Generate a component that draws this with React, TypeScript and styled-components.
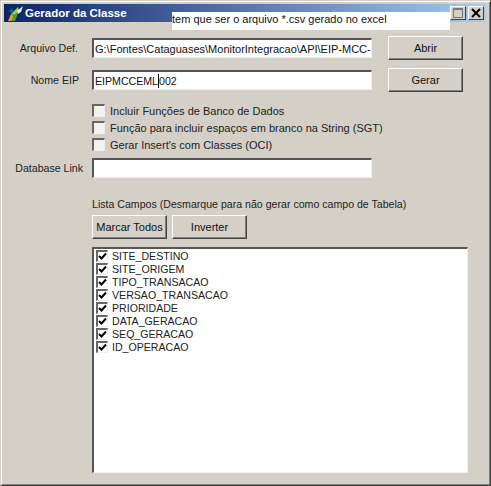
import styled, { createGlobalStyle } from "styled-components";

const FIELDS = [
  "SITE_DESTINO",
  "SITE_ORIGEM",
  "TIPO_TRANSACAO",
  "VERSAO_TRANSACAO",
  "PRIORIDADE",
  "DATA_GERACAO",
  "SEQ_GERACAO",
  "ID_OPERACAO",
];

const OPTIONS = [
  "Incluir Funções de Banco de Dados",
  "Função para incluir espaços em branco na String (SGT)",
  "Gerar Insert's com Classes (OCI)",
];

function AppIcon() {
  return (
    <svg width="18" height="17" viewBox="0 0 18 17">
      <path d="M2 16 L5 9 L8 11 L6 16 Z" fill="#d9a520" />
      <path d="M6 16 L9 6 L12 8 L9 16 Z" fill="#3f9f4a" />
      <path d="M5 9 L12 2 L13 6 L8 10 Z" fill="#8fcf5a" />
      <path d="M11 6 L17 1 L15 7 L12 9 Z" fill="#e8e8d0" />
      <path d="M3 6 L6 3 L7 6 L5 8 Z" fill="#1f6f3a" />
    </svg>
  );
}

function Check() {
  return (
    <svg width="9" height="9" viewBox="0 0 9 9">
      <path d="M1 4 L3.5 6.5 L8 1.5" fill="none" stroke="#000" strokeWidth="2" />
    </svg>
  );
}

export default function App() {
  return (
    <>
      <GlobalStyle />
      <Window>
        <TitleBar>
          <AppIcon />
          <TitleText>Gerador da Classe</TitleText>
          <TitleButtons>
            <CaptionButton>
              <svg width="10" height="10" viewBox="0 0 10 10">
                <path d="M0.5 0.5 H9.5 V9.5 H0.5 Z M0.5 1.5 H9.5" fill="none" stroke="#777" />
              </svg>
            </CaptionButton>
            <CaptionButton>
              <svg width="10" height="10" viewBox="0 0 10 10">
                <path d="M1 1 L9 9 M9 1 L1 9" fill="none" stroke="#000" strokeWidth="2" />
              </svg>
            </CaptionButton>
          </TitleButtons>
        </TitleBar>
        <Hint>tem que ser o arquivo *.csv gerado no excel</Hint>
        <Body>
          <FormRow>
            <RowLabel $inset={6}>Arquivo Def.</RowLabel>
            <TextField>G:\Fontes\Cataguases\MonitorIntegracao\API\EIP-MCC-</TextField>
            <PushButton>Abrir</PushButton>
          </FormRow>
          <FormRow>
            <RowLabel $inset={5}>Nome EIP</RowLabel>
            <TextField $compact>
              EIPMCCEML<Caret />002
            </TextField>
            <PushButton>Gerar</PushButton>
          </FormRow>
          <Options>
            {OPTIONS.map((text) => (
              <OptionRow key={text}>
                <CheckBox />
                {text}
              </OptionRow>
            ))}
          </Options>
          <LinkRow>
            <RowLabel $inset={1}>Database Link</RowLabel>
            <TextField />
          </LinkRow>
          <ListSection>
            <ListCaption>Lista Campos (Desmarque para não gerar como campo de Tabela)</ListCaption>
            <ListActions>
              <PushButton>Marcar Todos</PushButton>
              <PushButton>Inverter</PushButton>
            </ListActions>
            <FieldList>
              {FIELDS.map((name) => (
                <FieldItem key={name}>
                  <CheckBox $checked $small>
                    <Check />
                  </CheckBox>
                  {name}
                </FieldItem>
              ))}
            </FieldList>
          </ListSection>
        </Body>
      </Window>
    </>
  );
}

const GlobalStyle = createGlobalStyle`
  html, body {
    margin: 0;
    padding: 0;
    background: #d4d0c8;
  }
  * {
    box-sizing: border-box;
  }
`;

const Window = styled.div`
  position: relative;
  width: 491px;
  height: 486px;
  padding: 4px;
  background: #d4d0c8;
  border: 1px solid;
  border-color: #d4d0c8 #404040 #404040 #d4d0c8;
  box-shadow: inset 1px 1px 0 #fff, inset -1px -1px 0 #808080;
  font-family: "Liberation Sans", Arial, sans-serif;
  font-size: 11px;
  color: #111;
  overflow: hidden;
`;

const TitleBar = styled.div`
  display: flex;
  align-items: center;
  gap: 1px;
  height: 18px;
  margin: -1px 0 0 -1px;
  padding: 0 2px;
  background: linear-gradient(90deg, #0a246a, #a6caf0);
`;

const TitleText = styled.span`
  color: #fff;
  font-size: 11.5px;
  font-weight: bold;
`;

const TitleButtons = styled.div`
  display: flex;
  gap: 2px;
  margin-left: auto;
`;

const CaptionButton = styled.div`
  display: flex;
  align-items: center;
  justify-content: center;
  width: 16px;
  height: 14px;
  background: #d4d0c8;
  border: 1px solid;
  border-color: #fff #404040 #404040 #fff;
`;

const Hint = styled.div`
  position: absolute;
  left: 171px;
  top: 11px;
  width: 278px;
  height: 18px;
  line-height: 14px;
  background: #fff;
  color: #111;
`;

const Body = styled.div`
  display: flex;
  flex-direction: column;
  padding-top: 14px;
`;

const FormRow = styled.div`
  display: grid;
  grid-template-columns: 79px 280px 75px;
  column-gap: 8px;
  align-items: center;
  height: 24px;
  margin-bottom: 8px;

  & > button {
    margin-left: 8px;
  }
`;

const RowLabel = styled.label<{ $inset?: number }>`
  padding-right: ${(p) => p.$inset ?? 0}px;
  font-size: 10.6px;
  text-align: right;
  white-space: nowrap;
  color: #222;
`;

const TextField = styled.div<{ $compact?: boolean }>`
  display: flex;
  align-items: center;
  height: 20px;
  padding-left: 1px;
  background: #fff;
  color: #111;
  font-size: ${(p) => (p.$compact ? 10.6 : 11)}px;
  white-space: nowrap;
  overflow: hidden;
  border: 2px solid;
  border-color: #555 #eee #eee #555;
  border-right-width: 1px;
  border-bottom-width: 1px;
`;

const Caret = styled.span`
  display: inline-block;
  width: 1px;
  height: 14px;
  background: #000;
`;

const PushButton = styled.button`
  width: 75px;
  height: 24px;
  padding: 0;
  background: #d4d0c8;
  color: #111;
  font-family: inherit;
  font-size: 11px;
  border: 1px solid;
  border-color: #fff #404040 #404040 #fff;
  box-shadow: inset -1px -1px 0 #808080;
`;

const Options = styled.div`
  display: flex;
  flex-direction: column;
  gap: 4px;
  padding-left: 87px;
  margin-top: 4px;
`;

const OptionRow = styled.div`
  display: flex;
  align-items: center;
  gap: 5px;
  height: 13px;
  white-space: nowrap;
  color: #222;
`;

const CheckBox = styled.span<{ $checked?: boolean; $small?: boolean }>`
  display: flex;
  align-items: center;
  justify-content: center;
  flex: none;
  width: ${(p) => (p.$small ? 12 : 13)}px;
  height: ${(p) => (p.$small ? 12 : 13)}px;
  background: ${(p) => (p.$checked ? "#fff" : "#f4f2ee")};
  border: 2px solid;
  border-color: #666 #eee #eee #666;
  border-right-width: 1px;
  border-bottom-width: 1px;
`;

const LinkRow = styled(FormRow)`
  margin-top: 7px;
  height: 20px;
  margin-bottom: 0;
`;

const ListSection = styled.div`
  display: flex;
  flex-direction: column;
  padding-left: 87px;
  margin-top: 19px;
`;

const ListCaption = styled.div`
  height: 14px;
  line-height: 14px;
  font-size: 10.6px;
  white-space: nowrap;
  color: #222;
`;

const ListActions = styled.div`
  display: flex;
  gap: 5px;
  margin-top: 4px;
`;

const FieldList = styled.div`
  display: flex;
  flex-direction: column;
  width: 376px;
  height: 226px;
  margin-top: 8px;
  padding: 0 2px;
  background: #fff;
  border: 2px solid;
  border-color: #555 #eee #eee #555;
  border-right-width: 1px;
  border-bottom-width: 1px;
`;

const FieldItem = styled.div`
  display: flex;
  align-items: center;
  gap: 4px;
  height: 13px;
  font-size: 10.6px;
  white-space: nowrap;
  color: #222;
`;
